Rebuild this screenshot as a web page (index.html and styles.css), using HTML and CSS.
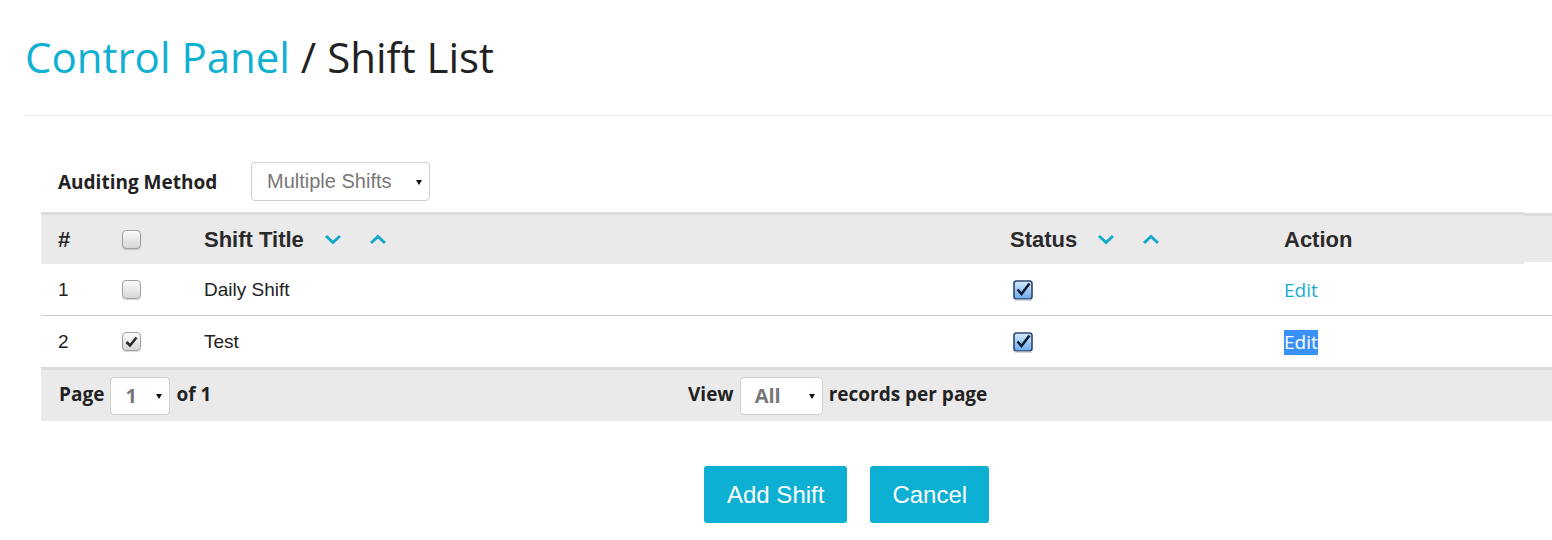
FILE: index.html
```html
<!DOCTYPE html>
<html lang="en">
<head>
<meta charset="utf-8">
<title>Shift List</title>
<link rel="stylesheet" href="styles.css">
</head>
<body>
<div class="page">
  <h1 class="title"><span class="crumb">Control Panel</span> / Shift List</h1>
  <hr class="rule">
  <div class="content">
    <div class="filter">
      <span class="filter-label">Auditing Method</span>
      <div class="select select-method"><span>Multiple Shifts</span><i class="caret"></i></div>
    </div>

    <div class="grid">
      <div class="row head">
        <div class="cell">#</div>
        <div class="cell"><span class="cb"></span></div>
        <div class="cell">Shift Title
          <svg class="sort sort-first" width="18" height="11" viewBox="0 0 18 11"><path d="M2 2 L9 8.5 L16 2" fill="none" stroke="#17a9cc" stroke-width="3"/></svg>
          <svg class="sort" width="18" height="11" viewBox="0 0 18 11"><path d="M2 9 L9 2.5 L16 9" fill="none" stroke="#17a9cc" stroke-width="3"/></svg>
        </div>
        <div class="cell">Status
          <svg class="sort sort-first" width="18" height="11" viewBox="0 0 18 11"><path d="M2 2 L9 8.5 L16 2" fill="none" stroke="#17a9cc" stroke-width="3"/></svg>
          <svg class="sort" width="18" height="11" viewBox="0 0 18 11"><path d="M2 9 L9 2.5 L16 9" fill="none" stroke="#17a9cc" stroke-width="3"/></svg>
        </div>
        <div class="cell">Action</div>
      </div>

      <div class="row item">
        <div class="cell">1</div>
        <div class="cell"><span class="cb"></span></div>
        <div class="cell">Daily Shift</div>
        <div class="cell">
          <svg class="status-cb" width="21" height="22" viewBox="0 0 21 22">
            <defs><linearGradient id="g1" x1="0" y1="0" x2="0" y2="1"><stop offset="0" stop-color="#d6ecff"/><stop offset="1" stop-color="#6aa9ea"/></linearGradient></defs>
            <rect x="1" y="1" width="18" height="18" rx="2.5" fill="url(#g1)" stroke="#2f4770" stroke-width="1.6"/>
            <rect x="2" y="19.5" width="17" height="1.5" fill="#cfd6e0"/>
            <path d="M4.5 9.5 L8.5 14 L16.5 3.5" fill="none" stroke="#0e1a33" stroke-width="2.6"/>
          </svg>
        </div>
        <div class="cell"><span class="link">Edit</span></div>
      </div>

      <div class="row item">
        <div class="cell">2</div>
        <div class="cell"><span class="cb checked"><svg width="13" height="11" viewBox="0 0 13 11"><path d="M1.5 6 L5 9.5 L11.5 1.5" fill="none" stroke="#2b2b2b" stroke-width="2.6"/></svg></span></div>
        <div class="cell">Test</div>
        <div class="cell">
          <svg class="status-cb" width="21" height="22" viewBox="0 0 21 22">
            <defs><linearGradient id="g2" x1="0" y1="0" x2="0" y2="1"><stop offset="0" stop-color="#d6ecff"/><stop offset="1" stop-color="#6aa9ea"/></linearGradient></defs>
            <rect x="1" y="1" width="18" height="18" rx="2.5" fill="url(#g2)" stroke="#2f4770" stroke-width="1.6"/>
            <rect x="2" y="19.5" width="17" height="1.5" fill="#cfd6e0"/>
            <path d="M4.5 9.5 L8.5 14 L16.5 3.5" fill="none" stroke="#0e1a33" stroke-width="2.6"/>
          </svg>
        </div>
        <div class="cell"><span class="link selected">Edit</span></div>
      </div>

      <div class="footer">
        <div class="pager">
          <span class="pager-text">Page</span>
          <div class="select select-page"><span>1</span><i class="caret"></i></div>
          <span class="pager-text">of 1</span>
        </div>
        <div class="pager">
          <span class="pager-text">View</span>
          <div class="select select-view"><span>All</span><i class="caret"></i></div>
          <span class="pager-text">records per page</span>
        </div>
      </div>
    </div>

    <div class="actions">
      <button class="btn btn-add">Add Shift</button>
      <button class="btn">Cancel</button>
    </div>
  </div>
</div>
</body>
</html>
```

FILE: styles.css
```css
html, body {
  margin: 0;
  padding: 0;
  background: #fff;
  overflow: hidden;
}

.page {
  padding-left: 25px;
  font-family: "Open Sans", "Liberation Sans", sans-serif;
  color: #222;
}

.title {
  margin: 0;
  padding-top: 28px;
  font-size: 42px;
  font-weight: 400;
  line-height: 57px;
  color: #222;
}

.crumb {
  color: #10b0d2;
}

.rule {
  margin: 30px 0 0 0;
  border: 0;
  border-top: 1px solid #ebebeb;
  height: 0;
}

.content {
  padding-left: 16px;
}

.filter {
  display: flex;
  align-items: center;
  margin-top: 46px;
  padding-left: 17px;
  height: 39px;
}

.filter-label {
  font-weight: 700;
  font-size: 19px;
  color: #222;
  width: 193px;
}

.select {
  position: relative;
  box-sizing: border-box;
  display: flex;
  align-items: center;
  background: #fff;
  border: 1px solid #cfcfcf;
  border-radius: 4px;
  height: 38px;
}

.caret {
  position: absolute;
  right: 7px;
  top: 50%;
  margin-top: -2px;
  width: 0;
  height: 0;
  border-left: 3px solid transparent;
  border-right: 3px solid transparent;
  border-top: 5px solid #111;
}

.select-method {
  width: 179px;
  height: 39px;
  padding-left: 15px;
  font-family: "Liberation Sans", Arial, sans-serif;
  font-size: 20px;
  color: #777;
}

.grid {
  margin-top: 11px;
  width: 1511px;
}

.row {
  display: grid;
  grid-template-columns: 64px 82px 806px 274px 285px;
  align-items: center;
}

.cell {
  padding-left: 17px;
  display: flex;
  align-items: center;
}

.head {
  position: relative;
  width: 1483px;
  grid-template-columns: 64px 82px 806px 274px 257px;
  background: #eaeaea;
  border-top: 3px solid #dcdcdc;
  height: 49px;
  font-family: "Liberation Sans", Arial, sans-serif;
  font-weight: 700;
  font-size: 22px;
  color: #2a2a2a;
}

.head::after {
  content: "";
  position: absolute;
  left: 100%;
  top: -2px;
  width: 28px;
  height: 46px;
  background: #eaeaea;
  border-top: 3px solid #dcdcdc;
}

.sort {
  margin-left: 10px;
  flex: none;
}

.sort-first {
  margin-left: 20px;
}

.sort + .sort {
  margin-left: 27px;
}

.item {
  height: 51px;
  font-family: "Liberation Sans", Arial, sans-serif;
  font-size: 19px;
  color: #222;
}

.item + .item {
  border-top: 1px solid #cccccc;
}

.cb {
  box-sizing: border-box;
  width: 19px;
  height: 19px;
  border: 1px solid #a0a0a0;
  border-radius: 4px;
  background: linear-gradient(#fbfbfb, #d6d6d6);
  box-shadow: 0 1px 1px rgba(0, 0, 0, 0.15);
  display: flex;
  align-items: center;
  justify-content: center;
}

.status-cb {
  margin-left: 3px;
  margin-top: 2px;
}

.link {
  font-family: "Open Sans", "Liberation Sans", sans-serif;
  font-size: 19px;
  color: #19acd0;
  line-height: 25px;
  margin-top: 2px;
}

.selected {
  background: #3990f6;
  color: #fff;
}

.footer {
  display: flex;
  align-items: center;
  background: #eaeaea;
  border-top: 3px solid #dcdcdc;
  height: 51px;
  padding-left: 18px;
  font-weight: 700;
  font-size: 19px;
  color: #222;
}

.pager {
  display: flex;
  align-items: center;
  gap: 6px;
}

.pager-text {
  padding-bottom: 4px;
}

.pager:first-child {
  width: 629px;
}

.select-page {
  width: 60px;
  padding-left: 14px;
  font-size: 20px;
  color: #777;
}

.select-view {
  width: 83px;
  padding-left: 14px;
  font-size: 20px;
  color: #777;
}

.actions {
  display: flex;
  gap: 23px;
  margin-top: 45px;
  padding-left: 663px;
}

.btn {
  height: 57px;
  padding: 0 22px;
  border: 0;
  border-radius: 3px;
  background: #0db0d2;
  color: #fff;
  font-family: "Liberation Sans", Arial, sans-serif;
  font-size: 24px;
}

.btn-add {
  padding: 0 23px;
}
```
